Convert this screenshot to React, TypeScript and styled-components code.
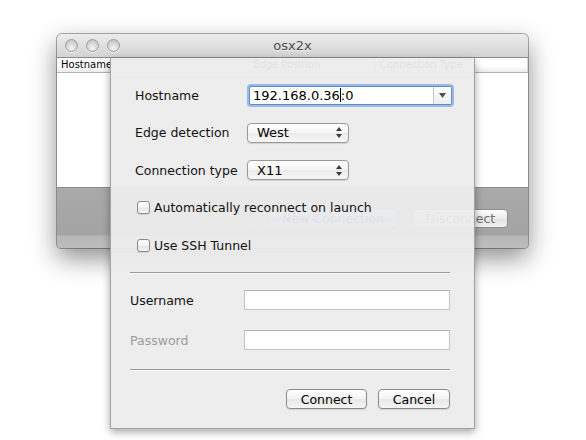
import React from "react";
import styled, { createGlobalStyle } from "styled-components";

const GlobalStyle = createGlobalStyle`
  html, body {
    margin: 0;
    padding: 0;
    background: #ffffff;
  }
  body {
    font-family: "DejaVu Sans", "Liberation Sans", sans-serif;
    font-size: 12px;
    color: #111;
  }
`;

const Stage = styled.div`
  position: relative;
  width: 586px;
  height: 440px;
  overflow: hidden;
  box-sizing: border-box;
  padding: 34px 0 0 57px;
`;

// background window
const Window = styled.div`
  width: 471px;
  height: 214px;
  display: flex;
  flex-direction: column;
  border-radius: 5px 5px 4px 4px;
  overflow: hidden;
  background: #a7a7a7;
  box-shadow: 0 0 0 1px rgba(0, 0, 0, 0.3), 0 10px 26px rgba(0, 0, 0, 0.45);
`;

const TitleBar = styled.div`
  flex: none;
  height: 23px;
  display: grid;
  grid-template-columns: 1fr auto 1fr;
  align-items: center;
  background: linear-gradient(#ececec, #d3d3d3);
  border-bottom: 1px solid #8a8a8a;
  padding: 0 8px;
`;

const Lights = styled.div`
  display: flex;
  gap: 8px;
`;

const Light = styled.span`
  width: 11px;
  height: 11px;
  border-radius: 50%;
  border: 1px solid #9b9b9b;
  background: radial-gradient(circle at 50% 75%, #f7f7f7 0%, #dadada 45%, #bdbdbd 100%);
  box-shadow: 0 1px 0 rgba(255, 255, 255, 0.7);
`;

const Title = styled.span`
  font-size: 13px;
  color: #4b4b4b;
  text-shadow: 0 1px 0 rgba(255, 255, 255, 0.6);
`;

const TableHeader = styled.div`
  flex: none;
  height: 14px;
  display: grid;
  grid-template-columns: 192px 127px 1fr;
  background: linear-gradient(#ffffff 55%, #ececec);
  border-bottom: 1px solid #b3b3b3;
`;

const HeaderCell = styled.span`
  font-size: 10px;
  line-height: 14px;
  padding-left: 4px;
  color: #000;
  border-right: 1px solid #d6d6d6;
  white-space: nowrap;
  overflow: hidden;
`;

const TableBody = styled.div`
  flex: 1;
  background: #ffffff;
`;

const BottomBar = styled.div`
  flex: none;
  height: 61px;
  box-sizing: border-box;
  border-top: 1px solid #8d8d8d;
  background: linear-gradient(#a9a9a9 0, #a4a4a4 78%, #b7b7b7 80%, #bdbdbd 100%);
  display: flex;
  justify-content: flex-end;
  align-items: flex-start;
  gap: 15px;
  padding: 21px 20px 0 0;
`;

const BarButton = styled.div<{ $width: number; $primary?: boolean }>`
  width: ${(p) => p.$width}px;
  height: 19px;
  box-sizing: border-box;
  border-radius: 4px;
  border: 1px solid ${(p) => (p.$primary ? "#5a7fb8" : "#8e8e8e")};
  background: ${(p) =>
    p.$primary
      ? "linear-gradient(#d6e6fb, #9cc1ef 50%, #80aee9 51%, #bcd7f7)"
      : "linear-gradient(#fdfdfd, #ececec 50%, #e2e2e2 51%, #f1f1f1)"};
  display: flex;
  align-items: center;
  justify-content: center;
  font-size: 12.5px;
  color: ${(p) => (p.$primary ? "#111" : "#6f6f6f")};
`;

// sheet
const Sheet = styled.div`
  position: absolute;
  left: 110px;
  top: 58px;
  width: 365px;
  height: 371px;
  box-sizing: border-box;
  background: rgba(236, 236, 236, 0.95);
  border: 1px solid #a2a2a2;
  border-top: none;
  box-shadow: 0 3px 8px rgba(0, 0, 0, 0.35);
  padding-top: 26px;
  display: flex;
  flex-direction: column;
`;

const TopGrid = styled.div`
  display: grid;
  grid-template-columns: 112px auto;
  grid-auto-rows: 22px;
  row-gap: 15.5px;
  align-items: center;
  padding-left: 24px;
`;

const Label = styled.span<{ $muted?: boolean }>`
  font-size: 12.5px;
  color: ${(p) => (p.$muted ? "#9b9b9b" : "#111")};
  white-space: nowrap;
`;

const Combo = styled.div`
  width: 203px;
  height: 19px;
  margin-left: 2px;
  box-sizing: border-box;
  display: flex;
  background: #fff;
  border: 1px solid #5e8ccc;
  border-radius: 2px;
  box-shadow: 0 0 0 2px rgba(125, 168, 230, 0.75);
`;

const ComboText = styled.div`
  flex: 1;
  font-size: 13px;
  line-height: 17px;
  padding-left: 3px;
  color: #000;
  white-space: nowrap;
`;

const Caret = styled.span`
  display: inline-block;
  width: 1px;
  height: 14px;
  background: #000;
  vertical-align: -2px;
`;

const ComboArrow = styled.div`
  width: 17px;
  border-left: 1px solid #c6c6c6;
  background: linear-gradient(#ffffff, #eeeeee);
  display: flex;
  align-items: center;
  justify-content: center;
`;

const Popup = styled.div`
  width: 102px;
  height: 20px;
  box-sizing: border-box;
  border: 1px solid #9a9a9a;
  border-radius: 4px;
  background: linear-gradient(#ffffff, #f4f4f4 50%, #ebebeb 51%, #f7f7f7);
  box-shadow: 0 1px 1px rgba(0, 0, 0, 0.12);
  display: flex;
  align-items: center;
  justify-content: space-between;
  padding: 0 6px 0 9px;
  font-size: 13px;
  color: #000;
`;

const CheckRow = styled.label`
  grid-column: 1 / span 2;
  display: flex;
  align-items: center;
  gap: 4px;
  padding-left: 2px;
`;

const CheckBox = styled.span`
  width: 13px;
  height: 13px;
  box-sizing: border-box;
  border: 1px solid #8a8a8a;
  border-radius: 3px;
  background: linear-gradient(#ffffff, #f2f2f2 50%, #e4e4e4 51%, #f6f6f6);
  box-shadow: 0 1px 1px rgba(0, 0, 0, 0.1);
`;

const Separator = styled.div<{ $top: number }>`
  height: 1px;
  margin: ${(p) => p.$top}px 24px 0 19px;
  background: #9c9c9c;
  box-shadow: 0 1px 0 rgba(255, 255, 255, 0.6);
`;

const BottomGrid = styled.div`
  display: grid;
  grid-template-columns: 114px 206px;
  grid-auto-rows: 22px;
  row-gap: 18px;
  align-items: center;
  padding-left: 19px;
  margin-top: 16px;
`;

const Field = styled.div`
  width: 206px;
  height: 20px;
  box-sizing: border-box;
  background: #ffffff;
  border: 1px solid #c3c3c3;
  border-top-color: #b3b3b3;
`;

const ButtonRow = styled.div`
  display: flex;
  justify-content: flex-end;
  gap: 11px;
  padding-right: 24px;
  margin-top: 19px;
`;

const PushButton = styled.button<{ $width: number }>`
  width: ${(p) => p.$width}px;
  height: 20px;
  box-sizing: border-box;
  padding: 0;
  border: 1px solid #8b8b8b;
  border-radius: 4px;
  background: linear-gradient(#ffffff, #f3f3f3 50%, #e7e7e7 51%, #f5f5f5);
  box-shadow: 0 1px 1px rgba(0, 0, 0, 0.12);
  font-family: "DejaVu Sans", "Liberation Sans", sans-serif;
  font-size: 12.5px;
  color: #000;
`;

const DownTriangle = () => (
  <svg width="7" height="5" viewBox="0 0 7 5">
    <path d="M0 0 L7 0 L3.5 5 Z" fill="#505050" />
  </svg>
);

const UpDown = () => (
  <svg width="6" height="11" viewBox="0 0 6 11">
    <path d="M0 4 L6 4 L3 0 Z" fill="#3c3c3c" />
    <path d="M0 7 L6 7 L3 11 Z" fill="#3c3c3c" />
  </svg>
);

export default function App() {
  return (
    <>
      <GlobalStyle />
      <Stage>
        <Window>
          <TitleBar>
            <Lights>
              <Light />
              <Light />
              <Light />
            </Lights>
            <Title>osx2x</Title>
            <span />
          </TitleBar>
          <TableHeader>
            <HeaderCell>Hostname</HeaderCell>
            <HeaderCell>Edge Position</HeaderCell>
            <HeaderCell>Connection Type</HeaderCell>
          </TableHeader>
          <TableBody />
          <BottomBar>
            <BarButton $width={130} $primary>
              New Connection
            </BarButton>
            <BarButton $width={95}>Disconnect</BarButton>
          </BottomBar>
        </Window>

        <Sheet>
          <TopGrid>
            <Label>Hostname</Label>
            <Combo>
              <ComboText>
                192.168.0.36<Caret />:0
              </ComboText>
              <ComboArrow>
                <DownTriangle />
              </ComboArrow>
            </Combo>

            <Label>Edge detection</Label>
            <Popup>
              West
              <UpDown />
            </Popup>

            <Label>Connection type</Label>
            <Popup>
              X11
              <UpDown />
            </Popup>

            <CheckRow>
              <CheckBox />
              <Label>Automatically reconnect on launch</Label>
            </CheckRow>
            <CheckRow>
              <CheckBox />
              <Label>Use SSH Tunnel</Label>
            </CheckRow>
          </TopGrid>

          <Separator $top={16} />

          <BottomGrid>
            <Label>Username</Label>
            <Field />
            <Label $muted>Password</Label>
            <Field />
          </BottomGrid>

          <Separator $top={18} />

          <ButtonRow>
            <PushButton $width={81}>Connect</PushButton>
            <PushButton $width={72}>Cancel</PushButton>
          </ButtonRow>
        </Sheet>
      </Stage>
    </>
  );
}
